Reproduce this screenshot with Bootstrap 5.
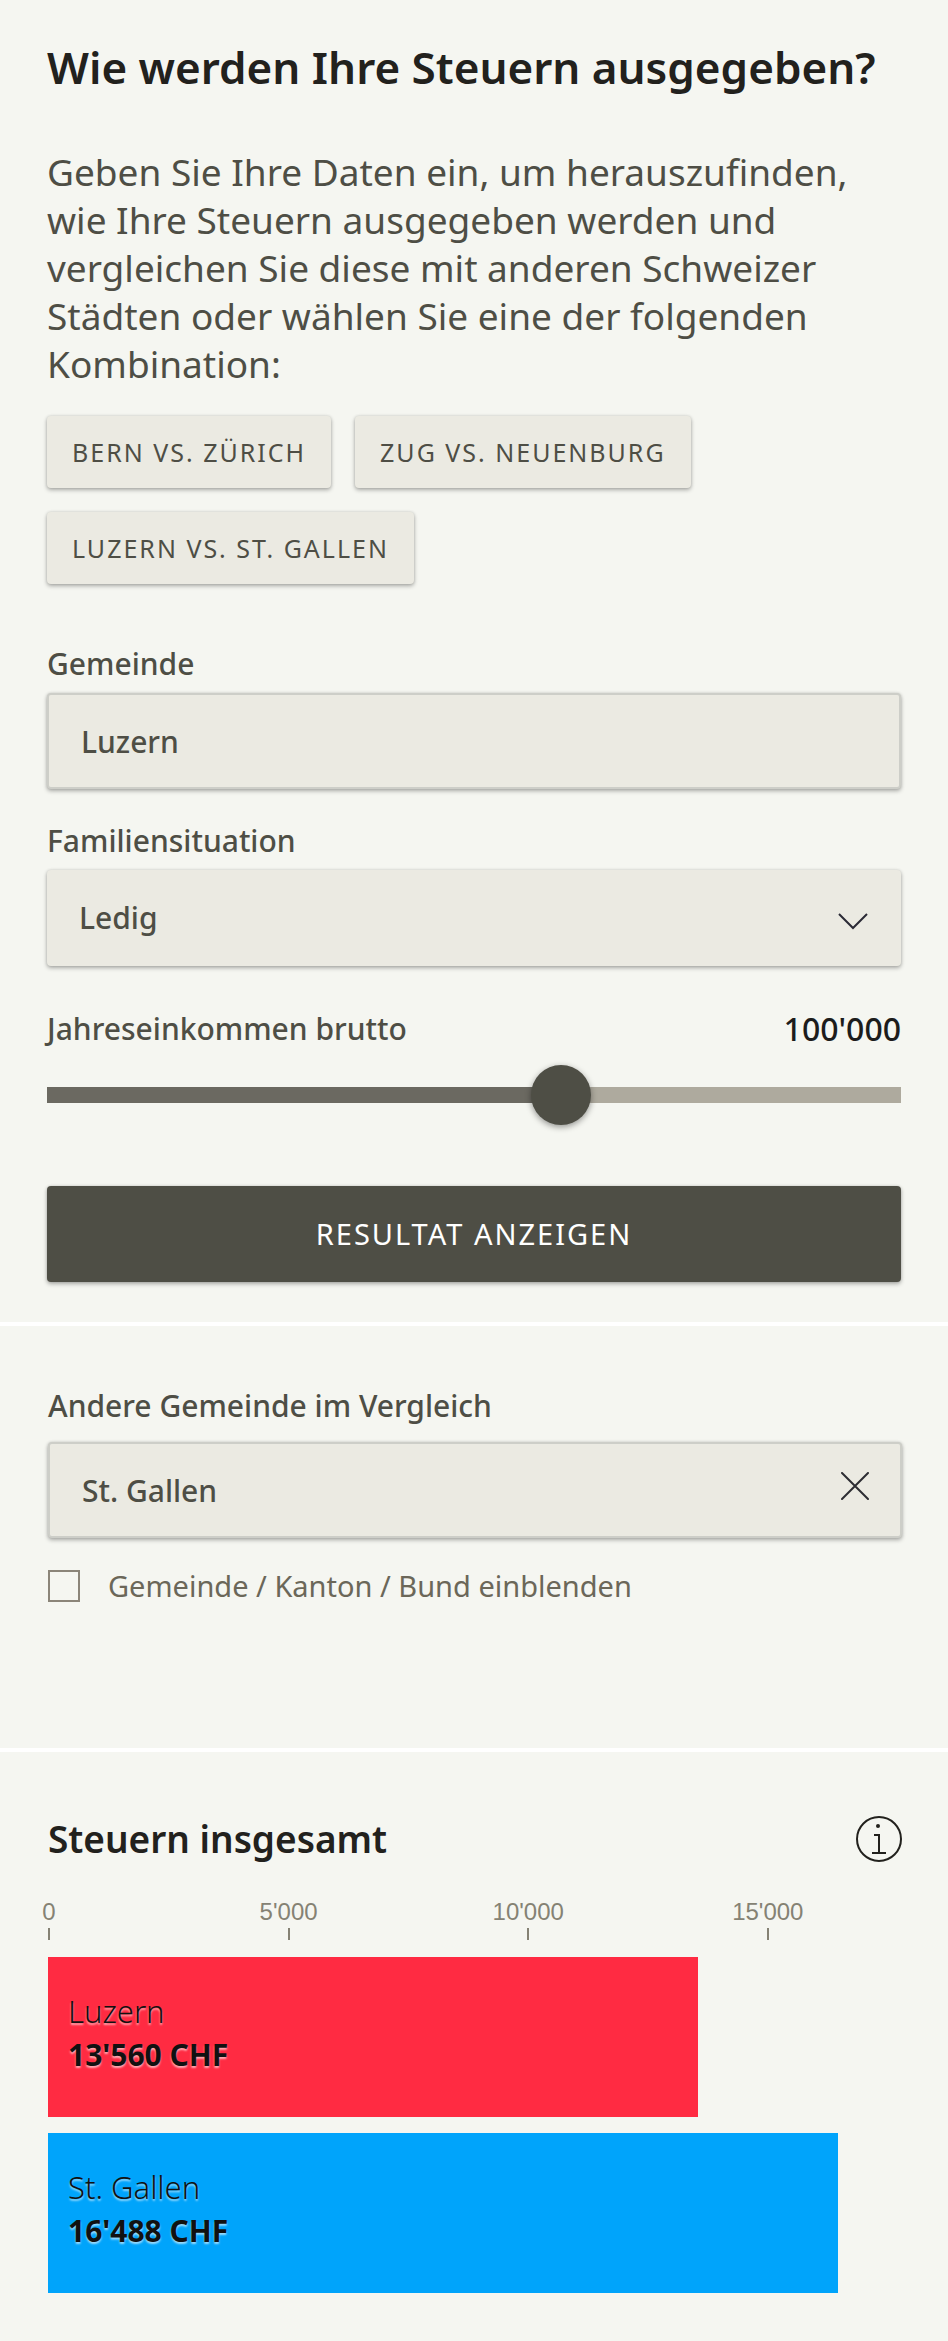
<!DOCTYPE html>
<html lang="de">
<head>
<meta charset="utf-8">
<meta name="viewport" content="width=device-width, initial-scale=1">
<title>Wie werden Ihre Steuern ausgegeben?</title>
<link href="https://cdn.jsdelivr.net/npm/bootstrap@5.3.0/dist/css/bootstrap.min.css" rel="stylesheet">
<style>
  :root {
    --ink: #22211d;
    --olive: #4e4e45;
    --field: #ebeae2;
    --edge: #cdcec8;
    --lift: 0 2px 4px rgba(0, 0, 0, .3), 0 0 3px rgba(0, 0, 0, .12);
  }
  body { background: #f5f6f1; color: var(--olive); font-family: "Noto Sans", "Open Sans", sans-serif; font-size: 30px; line-height: 40px; }
  .panel { padding: 0 46px 0 48px; }
  .panel + .panel { border-top: 4px solid #fff; }
  .panel-form { padding: 39px 47px 40px; }
  .panel-compare { padding-top: 60px; padding-bottom: 142px; }
  .panel-chart { padding-top: 64px; padding-bottom: 48px; }
  h1 { color: var(--ink); font-size: 44px; line-height: 56px; font-weight: 600; margin-bottom: 53px; }
  .intro { font-size: 37px; line-height: 48px; margin-bottom: 28px; }
  .btn-preset { background: var(--field); color: var(--olive); box-shadow: var(--lift); border: 0; border-radius: 4px; font-size: 25px; line-height: 40px; padding: 16px 25px; letter-spacing: 2px; text-transform: uppercase; }
  .btn-preset:hover { background: #e0dfd5; }
  .presets { gap: 24px; margin-bottom: 60px; }
  .form-label, .field-label { font-weight: 500; margin: 0; }
  .form-label { padding-bottom: 9px; }
  .panel-compare .form-label { padding-bottom: 16px; }
  .form-control, .form-select { background-color: var(--field); color: var(--olive); font-size: 30px; line-height: 40px; font-weight: 500; height: 96px; border-radius: 4px; box-shadow: var(--lift); }
  .form-control { border: 2px solid var(--edge); padding: 0 32px; }
  .form-select { border: 0; padding: 0 80px 0 32px; background-image: url("data:image/svg+xml,%3Csvg xmlns='http://www.w3.org/2000/svg' viewBox='0 0 30 17'%3E%3Cpath d='M1 1l14 14L29 1' fill='none' stroke='%232b2b36' stroke-width='2'/%3E%3C/svg%3E"); background-size: 30px 17px; background-position: right 33px top 43px; }
  .form-control:focus, .form-select:focus { background-color: var(--field); color: var(--olive); }
  .group { margin-bottom: 32px; }
  .income { margin: 43px 0 61px; }
  .income-head { margin-bottom: 16px; }
  .amount { color: #1c1c1c; font-weight: 500; font-size: 32px; }
  .form-range { height: 60px; }
  .form-range::-webkit-slider-runnable-track { height: 16px; border-radius: 0; background: linear-gradient(90deg, #6b6961 60%, #aeaa9e 60%); }
  .form-range::-webkit-slider-thumb { width: 60px; height: 60px; margin-top: -22px; border-radius: 50%; background: var(--olive); box-shadow: 0 2px 6px rgba(0, 0, 0, .4); }
  .btn-result { background: var(--olive); color: #fff; border: 0; border-radius: 4px; box-shadow: var(--lift); height: 96px; font-size: 29px; line-height: 40px; letter-spacing: 2px; text-transform: uppercase; }
  .btn-result:hover { background: #3c3c35; color: #fff; }
  .clear { right: 33px; top: 30px; }
  .tick-row { gap: 28px; margin-top: 28px; color: #6b6759; font-size: 29px; }
  .form-check-input { width: 32px; height: 32px; margin: 0; border: 2px solid #8b8579; border-radius: 0 !important; background-color: transparent; }
  h2 { color: var(--ink); font-size: 37px; line-height: 46px; font-weight: 600; margin: 0; }
  .axis { color: #858274; font: 24px/28px "Liberation Sans", Arial, sans-serif; margin-top: 36px; margin-bottom: 17px; }
  .axis-step { flex: 0 0 28.057%; }
  .axis-mark { width: 2px; white-space: nowrap; }
  .axis-mark i { width: 2px; height: 12px; background: #858274; margin-top: 2px; }
  .bars { gap: 16px; }
  .tax-bar { height: 160px; padding: 32px 20px; color: #111; line-height: 44px; text-shadow: 0 2px 2px rgba(255, 255, 255, .6); white-space: nowrap; }
  .tax-bar span { font-weight: 300; font-size: 31px; }
  .tax-bar strong { font-weight: 700; font-size: 30px; }
  .bar-red { background: #ff2b42; }
  .bar-blue { background: #00a4fb; }
</style>
</head>
<body>
<main>
  <section class="panel panel-form">
    <h1>Wie werden Ihre Steuern ausgegeben?</h1>
    <p class="intro">Geben Sie Ihre Daten ein, um herauszufinden, wie Ihre Steuern ausgegeben werden und vergleichen Sie diese mit anderen Schweizer Städten oder wählen Sie eine der folgenden Kombination:</p>
    <div class="presets d-flex flex-wrap">
      <button type="button" class="btn btn-preset">Bern vs. Zürich</button>
      <button type="button" class="btn btn-preset">Zug vs. Neuenburg</button>
      <button type="button" class="btn btn-preset">Luzern vs. St. Gallen</button>
    </div>
    <div class="group">
      <label class="form-label d-block" for="town">Gemeinde</label>
      <input class="form-control" id="town" type="text" value="Luzern">
    </div>
    <div>
      <label class="form-label d-block" for="family">Familiensituation</label>
      <select class="form-select" id="family"><option>Ledig</option><option>Verheiratet</option></select>
    </div>
    <div class="income">
      <div class="income-head d-flex justify-content-between">
        <label class="field-label" for="income">Jahreseinkommen brutto</label>
        <output class="amount" for="income">100'000</output>
      </div>
      <input class="form-range d-block" id="income" type="range" min="0" max="100" value="61">
    </div>
    <button type="button" class="btn btn-result d-block w-100">Resultat anzeigen</button>
  </section>

  <section class="panel panel-compare">
    <label class="form-label d-block" for="other">Andere Gemeinde im Vergleich</label>
    <div class="position-relative">
      <input class="form-control" id="other" type="text" value="St. Gallen">
      <button type="button" class="clear btn p-0 border-0 position-absolute d-flex" aria-label="Entfernen">
        <svg width="28" height="28" viewBox="0 0 28 28" fill="none" stroke="#2d2d33" stroke-width="2" stroke-linecap="round"><path d="M1 1l26 26M27 1L1 27"/></svg>
      </button>
    </div>
    <div class="tick-row d-flex align-items-center">
      <input class="form-check-input" type="checkbox" id="levels">
      <label for="levels">Gemeinde / Kanton / Bund einblenden</label>
    </div>
  </section>

  <section class="panel panel-chart">
    <div class="d-flex justify-content-between align-items-center">
      <h2>Steuern insgesamt</h2>
      <button type="button" class="btn p-0 border-0 d-flex" aria-label="Information">
        <svg width="46" height="46" viewBox="0 0 46 46" fill="none" stroke="#22211d" stroke-width="2"><circle cx="23" cy="23" r="22"/><path d="M18 19h5v18M16 37h14"/><circle cx="22" cy="10" r="2" fill="#22211d" stroke="none"/></svg>
      </button>
    </div>
    <div class="axis d-flex">
      <div class="axis-step"><div class="axis-mark d-flex flex-column align-items-center">0<i></i></div></div>
      <div class="axis-step"><div class="axis-mark d-flex flex-column align-items-center">5'000<i></i></div></div>
      <div class="axis-step"><div class="axis-mark d-flex flex-column align-items-center">10'000<i></i></div></div>
      <div><div class="axis-mark d-flex flex-column align-items-center">15'000<i></i></div></div>
    </div>
    <div class="bars d-flex flex-column">
      <div class="tax-bar bar-red d-flex flex-column" style="width: 76.090%"><span>Luzern</span><strong>13'560 CHF</strong></div>
      <div class="tax-bar bar-blue d-flex flex-column" style="width: 92.520%"><span>St. Gallen</span><strong>16'488 CHF</strong></div>
    </div>
  </section>
</main>
<script src="https://cdn.jsdelivr.net/npm/bootstrap@5.3.0/dist/js/bootstrap.bundle.min.js"></script>
</body>
</html>
